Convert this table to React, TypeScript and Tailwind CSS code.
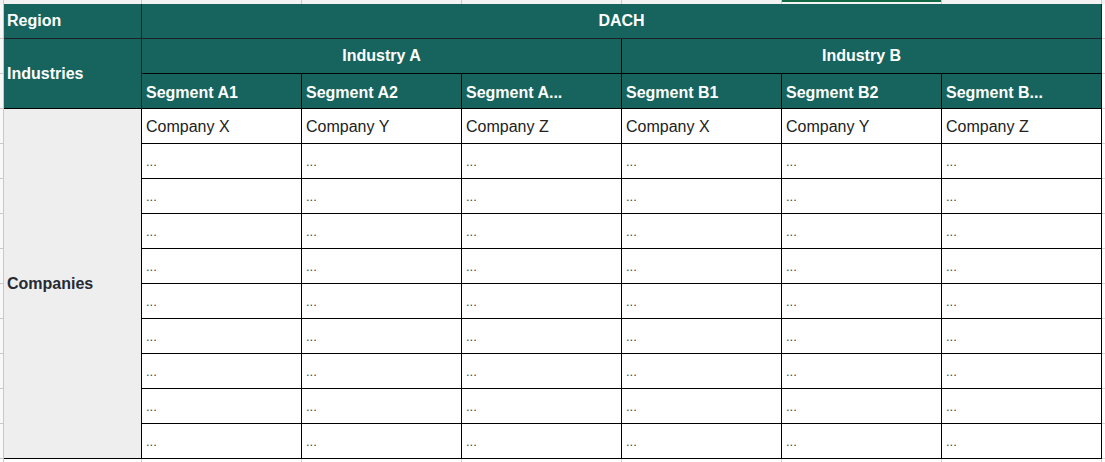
import React from "react";

const G = "bg-[#16645d]";
const font = { fontFamily: '"Liberation Sans", Arial, sans-serif' };

export default function App() {
  const segs = ["Segment A1", "Segment A2", "Segment A...", "Segment B1", "Segment B2", "Segment B..."];
  const first = ["Company X", "Company Y", "Company Z", "Company X", "Company Y", "Company Z"];
  const rows = Array.from({ length: 9 });
  const hdr = `${G} text-white font-bold text-[16px] border-r border-b border-[#1c2226] flex`;
  const cell = "bg-white border-r border-b border-black flex items-end px-[4px] pb-[7px] leading-[18px]";
  return (
    <div className="w-[1105px] h-[462px] bg-white overflow-hidden flex flex-col" style={font}>
      {/* top strip */}
      <div className="flex h-[4px] bg-[#f3f3f3]">
        <div className="w-[4px] border-r border-[#c9c9c9]" />
        <div className="w-[138px] border-r border-[#c9c9c9]" />
        {[0, 1, 2, 3, 4, 5].map((i) => (
          <div key={i} className="w-[160px] border-r border-[#c9c9c9] flex flex-col">
            {i === 4 ? <div className="h-[2px] bg-[#126a44]" /> : null}
          </div>
        ))}
      </div>
      <div className="flex">
        {/* left margin */}
        <div className="w-[4px] flex flex-col">
          {Array.from({ length: 13 }).map((_, i) => (
            <div key={i} className="h-[35px] border-r border-b border-[#c9c9c9] bg-[#f8f8f8]" />
          ))}
        </div>
        <div className="grid grid-cols-[138px_repeat(6,160px)] grid-rows-[repeat(13,35px)] text-[#222]">
          <div className={`${hdr} col-start-1 row-start-1 items-center px-[3px]`}>Region</div>
          <div className={`${hdr} col-start-2 col-span-6 row-start-1 items-center justify-center`}>DACH</div>
          <div className={`${hdr} col-start-1 row-start-2 row-span-2 items-center px-[3px] border-b-black`}>Industries</div>
          <div className={`${hdr} col-start-2 col-span-3 row-start-2 items-center justify-center border-r-black border-b-black`}>Industry A</div>
          <div className={`${hdr} col-start-5 col-span-3 row-start-2 items-center justify-center border-b-black`}>Industry B</div>
          {segs.map((s, i) => (
            <div
              key={s}
              className={`${hdr} row-start-3 items-end px-[4px] pb-[6px] leading-[18px] border-black`}
              style={{ gridColumnStart: i + 2 }}
            >
              {s}
            </div>
          ))}
          <div className="col-start-1 row-start-4 row-span-10 bg-[#eeeeee] border-r border-b border-black flex items-center px-[3px] font-bold text-[16px] text-[#252a35]">
            Companies
          </div>
          {first.map((c, i) => (
            <div key={i} className={`${cell} text-[16px] text-[#222]`} style={{ gridColumnStart: i + 2, gridRowStart: 4 }}>
              {c}
            </div>
          ))}
          {rows.map((_, r) =>
            first.map((_, i) => (
              <div
                key={`${r}-${i}`}
                className={`${cell} text-[13px] text-[#444]`}
                style={{ gridColumnStart: i + 2, gridRowStart: r + 5 }}
              >
                ...
              </div>
            ))
          )}
        </div>
        {/* right margin */}
        <div className="flex-1 flex flex-col">
          {Array.from({ length: 13 }).map((_, i) => (
            <div key={i} className="h-[35px] border-b border-[#d6d6d6]" />
          ))}
        </div>
      </div>
      <div className="flex flex-1">
        <div className="w-[4px] border-r border-[#c9c9c9]" />
        <div className="w-[138px] border-r border-[#d6d6d6]" />
        {[0, 1, 2, 3, 4, 5].map((i) => (
          <div key={i} className="w-[160px] border-r border-[#d6d6d6]" />
        ))}
      </div>
    </div>
  );
}
